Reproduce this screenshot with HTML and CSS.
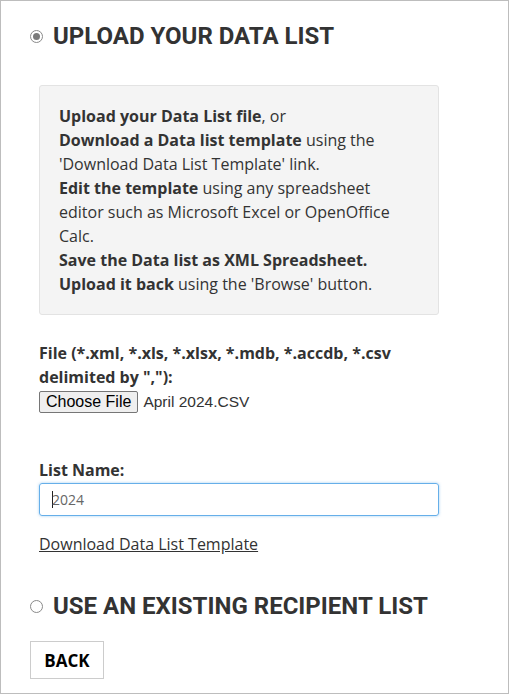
FILE: index.html
```html
<!DOCTYPE html>
<html>
<head>
<meta charset="utf-8">
<link rel="stylesheet" href="styles.css">
</head>
<body>
<div class="frame">
  <div class="option">
    <span class="radio checked"></span>
    <h2 class="opt-title">UPLOAD YOUR DATA LIST</h2>
  </div>
  <div class="section">
    <div class="info">
      <strong>Upload your Data List file</strong>, or<br>
      <strong>Download a Data list template</strong> using the 'Download Data List Template' link.<br>
      <strong>Edit the template</strong> using any spreadsheet editor such as Microsoft Excel or OpenOffice Calc.<br>
      <strong>Save the Data list as XML Spreadsheet.</strong><br>
      <strong>Upload it back</strong> using the 'Browse' button.
    </div>
    <label class="field-label file-label">File (*.xml, *.xls, *.xlsx, *.mdb, *.accdb, *.csv delimited by ","):</label>
    <div class="file-row">
      <button class="file-btn" type="button">Choose File</button>
      <span class="file-name">April 2024.CSV</span>
    </div>
    <label class="field-label name-label">List Name:</label>
    <div class="text-input"><span class="caret"></span>2024</div>
    <a class="tpl-link" href="#">Download Data List Template</a>
  </div>
  <div class="option option-2">
    <span class="radio"></span>
    <h2 class="opt-title">USE AN EXISTING RECIPIENT LIST</h2>
  </div>
  <button class="back-btn" type="button">BACK</button>
</div>
</body>
</html>
```
FILE: styles.css
```css
* { box-sizing: border-box; }
html, body { margin: 0; padding: 0; background: #fff; }
.frame {
  width: 509px;
  height: 694px;
  border: 1px solid #bdbdbd;
  padding: 0 0 0 29px;
  font-family: "Open Sans", sans-serif;
  color: #333;
  overflow: hidden;
}
.option {
  display: flex;
  align-items: center;
  gap: 10px;
  margin-top: 20px;
  height: 30px;
}
.option-2 { margin-top: 35px; }
.radio {
  width: 13px;
  height: 13px;
  border-radius: 50%;
  border: 1px solid #8a8a8a;
  background: #fff;
  position: relative;
  flex: none;
}
.radio.checked::after {
  content: "";
  position: absolute;
  left: 2px; top: 2px;
  width: 7px; height: 7px;
  border-radius: 50%;
  background: #7a7a7a;
}
.opt-title {
  margin: 0;
  font-family: Roboto, "Liberation Sans", sans-serif;
  font-weight: 700;
  font-size: 24px;
  line-height: 30px;
  color: #333;
}
.section {
  margin-left: 9px;
  width: 400px;
}
.info {
  margin-top: 34px;
  background: #f4f4f4;
  border: 1px solid #e3e3e3;
  border-radius: 3px;
  padding: 18px 19px 18px 19px;
  font-size: 16px;
  line-height: 24px;
  color: #333;
}
.info strong { font-weight: 700; }
.field-label {
  display: block;
  font-weight: 700;
  font-size: 16px;
  line-height: 24px;
  color: #333;
}
.file-label { margin-top: 26px; }
.file-row {
  display: flex;
  align-items: center;
  gap: 5px;
  margin-top: 2px;
  height: 22px;
}
.file-btn {
  height: 22px;
  padding: 0 6px;
  background: #efefef;
  border: 1px solid #767676;
  border-radius: 2px;
  font-family: "Liberation Sans", Arial, sans-serif;
  font-size: 16px;
  color: #000;
}
.file-name {
  font-family: "Liberation Sans", Arial, sans-serif;
  font-size: 15.5px;
  color: #333;
}
.name-label { margin-top: 45px; }
.text-input {
  margin-top: 1px;
  height: 33px;
  width: 400px;
  border: 1px solid #66afe9;
  border-radius: 3px;
  box-shadow: 0 0 3px rgba(102, 175, 233, 0.6);
  padding: 0 0 0 12px;
  display: flex;
  align-items: center;
  font-size: 14px;
  color: #666;
  position: relative;
}
.caret {
  display: inline-block;
  width: 1px;
  height: 17px;
  background: #222;
  margin-right: -1px;
}
.tpl-link {
  display: inline-block;
  margin-top: 16px;
  font-size: 16px;
  line-height: 24px;
  color: #333;
  text-decoration: underline;
}
.back-btn {
  display: block;
  margin-top: 20px;
  height: 38px;
  width: 74px;
  background: #fff;
  border: 1px solid #ccc;
  border-radius: 0;
  font-family: "Open Sans", sans-serif;
  font-weight: 700;
  font-size: 17px;
  color: #000;
  padding: 0;
}
```
